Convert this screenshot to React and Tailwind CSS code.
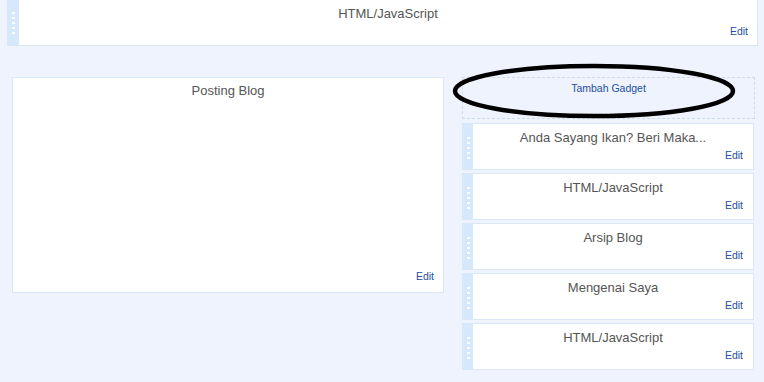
import React from "react";

function Dots() {
  return (
    <div className="flex flex-col gap-[3px] pl-[4px]">
      {[0, 1, 2, 3, 4].map((i) => (
        <div key={i} className="w-[3px] h-[2px] bg-white" />
      ))}
    </div>
  );
}

function Widget({ title, className = "" }) {
  return (
    <div className={"flex border border-[#d9e7f6] " + className}>
      <div className="w-[10px] bg-[#d6e8fb] pt-[13px] shrink-0">
        <Dots />
      </div>
      <div className="flex-1 bg-white flex flex-col">
        <div className="text-center text-[13px] leading-[16px] text-[#555] pt-[6px]">{title}</div>
        <div className="text-right text-[10.5px] leading-[13px] text-[#24509e] mt-[3px] pr-[10px]">Edit</div>
      </div>
    </div>
  );
}

export default function App() {
  return (
    <div className="w-[764px] h-[382px] bg-[#eef3fd] font-['Liberation_Sans',Arial,sans-serif] overflow-hidden">
      <div className="pl-[7px] pr-[6px]">
        <div className="flex h-[46px] border border-t-0 border-[#d9e7f6]">
          <div className="w-[11px] bg-[#d6e8fb] pt-[12px] shrink-0">
            <Dots />
          </div>
          <div className="flex-1 bg-white flex flex-col">
            <div className="text-center text-[13px] leading-[16px] text-[#555] pt-[6px]">HTML/JavaScript</div>
            <div className="text-right text-[10.5px] leading-[13px] text-[#24509e] mt-[3px] pr-[9px]">Edit</div>
          </div>
        </div>
      </div>
      <div className="flex mt-[31px] pl-[12px]">
        <div className="w-[432px] h-[216px] bg-white border border-[#d9e7f6] flex flex-col justify-between pb-[9px]">
          <div className="text-center text-[13px] leading-[16px] text-[#555] pt-[5px]">Posting Blog</div>
          <div className="text-right text-[10.5px] leading-[13px] text-[#24509e] pr-[9px]">Edit</div>
        </div>
        <div className="ml-[18px] w-[293px] flex flex-col">
          <div className="relative h-[42px] border border-dashed border-[#cfdcec] flex justify-center pt-[4px]">
            <span className="text-[10.5px] leading-[13px] text-[#24509e]">Tambah Gadget</span>
            <svg className="absolute left-[-12px] top-[-17px]" width="290" height="60" viewBox="0 0 290 60">
              <ellipse cx="143" cy="30" rx="139" ry="25" fill="none" stroke="#000" strokeWidth="4.5" />
            </svg>
          </div>
          <div className="flex flex-col gap-[3px] mt-[4px] pr-[1px]">
            <Widget title="Anda Sayang Ikan? Beri Maka..." className="h-[47px]" />
            <Widget title="HTML/JavaScript" className="h-[47px]" />
            <Widget title="Arsip Blog" className="h-[47px]" />
            <Widget title="Mengenai Saya" className="h-[47px]" />
            <Widget title="HTML/JavaScript" className="h-[47px]" />
          </div>
        </div>
      </div>
    </div>
  );
}
